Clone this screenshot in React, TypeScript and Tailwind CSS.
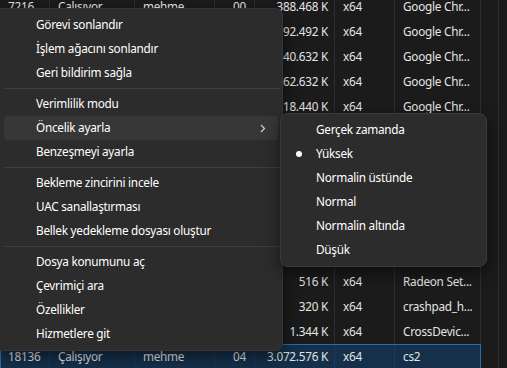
import React from "react";

type Row = {
    pid: string;
    status: string;
    user: string;
    session: string;
    memory: string;
    arch: string;
    name: string;
    selected?: boolean;
};

const rows: Row[] = [
    { pid: "7216", status: "Çalışıyor", user: "mehme", session: "00", memory: "388.468 K", arch: "x64", name: "Google Chr..." },
    { pid: "7380", status: "Çalışıyor", user: "mehme", session: "00", memory: "92.492 K", arch: "x64", name: "Google Chr..." },
    { pid: "7412", status: "Çalışıyor", user: "mehme", session: "00", memory: "40.632 K", arch: "x64", name: "Google Chr..." },
    { pid: "7508", status: "Çalışıyor", user: "mehme", session: "00", memory: "62.632 K", arch: "x64", name: "Google Chr..." },
    { pid: "7664", status: "Çalışıyor", user: "mehme", session: "00", memory: "18.440 K", arch: "x64", name: "Google Chr..." },
    { pid: "7820", status: "Çalışıyor", user: "mehme", session: "00", memory: "24.116 K", arch: "x64", name: "Google Chr..." },
    { pid: "8012", status: "Çalışıyor", user: "mehme", session: "00", memory: "11.204 K", arch: "x64", name: "Google Chr..." },
    { pid: "8140", status: "Çalışıyor", user: "mehme", session: "00", memory: "8.932 K", arch: "x64", name: "Discord.exe" },
    { pid: "9024", status: "Çalışıyor", user: "mehme", session: "00", memory: "6.120 K", arch: "x64", name: "Steam.exe" },
    { pid: "9488", status: "Çalışıyor", user: "mehme", session: "00", memory: "2.048 K", arch: "x64", name: "explorer.exe" },
    { pid: "10232", status: "Çalışıyor", user: "mehme", session: "00", memory: "1.876 K", arch: "x64", name: "svchost.exe" },
    { pid: "11456", status: "Çalışıyor", user: "mehme", session: "00", memory: "516 K", arch: "x64", name: "Radeon Set..." },
    { pid: "12780", status: "Çalışıyor", user: "mehme", session: "00", memory: "320 K", arch: "x64", name: "crashpad_h..." },
    { pid: "14312", status: "Çalışıyor", user: "mehme", session: "00", memory: "1.344 K", arch: "x64", name: "CrossDevic..." },
    { pid: "18136", status: "Çalışıyor", user: "mehme", session: "04", memory: "3.072.576 K", arch: "x64", name: "cs2", selected: true },
];

const menuGroups = [
    ["Görevi sonlandır", "İşlem ağacını sonlandır", "Geri bildirim sağla"],
    ["Verimlilik modu", "Öncelik ayarla", "Benzeşmeyi ayarla"],
    ["Bekleme zincirini incele", "UAC sanallaştırması", "Bellek yedekleme dosyası oluştur"],
    ["Dosya konumunu aç", "Çevrimiçi ara", "Özellikler", "Hizmetlere git"],
];

const priorities = ["Gerçek zamanda", "Yüksek", "Normalin üstünde", "Normal", "Normalin altında", "Düşük"];

const TableRow = ({ row }: { row: Row }) => {
    const line = row.selected ? "border-[#1d3a57]" : "border-[#2d2d2d]";
    return (
        <div
            className={`flex h-[25px] items-center ${
                row.selected ? "bg-[#15304b] outline outline-1 -outline-offset-1 outline-[#2f6ca3]" : ""
            }`}
        >
            <div className={`w-[50px] h-full flex items-center pl-2 border-r ${line}`}>{row.pid}</div>
            <div className={`w-[85px] h-full flex items-center pl-2 border-r ${line}`}>{row.status}</div>
            <div className={`w-[80px] h-full flex items-center pl-2 border-r ${line}`}>{row.user}</div>
            <div className={`w-[40px] h-full flex items-center justify-end pr-2 border-r ${line}`}>{row.session}</div>
            <div className={`w-[80px] h-full flex items-center justify-end pr-1.5 border-r ${line} whitespace-nowrap`}>
                {row.memory}
            </div>
            <div className={`w-[60px] h-full flex items-center pl-2 border-r ${line}`}>{row.arch}</div>
            <div className={`w-[86px] h-full flex items-center pl-2 border-r ${line} whitespace-nowrap`}>{row.name}</div>
        </div>
    );
};

export default function App() {
    return (
        <div
            className="relative w-[507px] h-[368px] overflow-hidden bg-[#1b1b1b] text-[11.75px] tracking-[-0.25px] text-[#e4e4e4]"
            style={{ fontFamily: '"Noto Sans", "Open Sans", sans-serif' }}
        >
            <div className="flex -mt-[6px]">
                <div className="w-[481px]">
                    {rows.map((row) => (
                        <TableRow key={row.pid} row={row} />
                    ))}
                </div>
                <div className="w-[18px] h-[380px] border-r border-[#2d2d2d]" />
            </div>

            {/* context menu */}
            <div className="absolute left-0 top-[8px] w-[283px] bg-[#2c2c2c] rounded-r-lg border border-l-0 border-[#353535] py-1 shadow-[0_6px_16px_rgba(0,0,0,0.5)] text-white">
                {menuGroups.map((group, gi) => (
                    <div key={gi}>
                        {gi > 0 && <div className="h-px bg-[#3e3e3e] ml-1 mr-[2px] my-[3px]" />}
                        {group.map((label) => (
                            <div
                                key={label}
                                className={`h-6 mx-1 rounded flex items-center pl-8 pr-2 ${
                                    label === "Öncelik ayarla" ? "bg-[#373737]" : ""
                                }`}
                            >
                                <span className="flex-1">{label}</span>
                                {label === "Öncelik ayarla" && (
                                    <svg width="6" height="9" viewBox="0 0 6 9" fill="none" className="mr-1">
                                        <path d="M1 1l3.5 3.5L1 8" stroke="#d8d8d8" strokeWidth="1.1" />
                                    </svg>
                                )}
                            </div>
                        ))}
                    </div>
                ))}
            </div>

            {/* priority submenu */}
            <div className="absolute left-[280px] top-[113px] w-[207px] bg-[#2c2c2c] rounded-lg border border-[#3b3b3b] py-1 shadow-[0_6px_16px_rgba(0,0,0,0.5)] text-white">
                {priorities.map((p) => (
                    <div key={p} className="h-6 flex items-center">
                        <div className="w-[35px] flex justify-center pl-[1px]">
                            {p === "Yüksek" && <div className="w-[6px] h-[6px] rounded-full bg-white" />}
                        </div>
                        <span>{p}</span>
                    </div>
                ))}
            </div>
        </div>
    );
}
